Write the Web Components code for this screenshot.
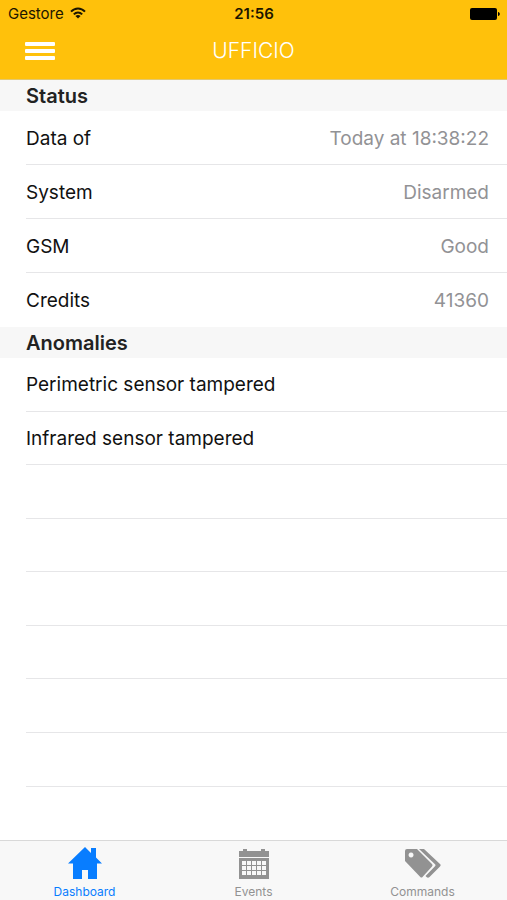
<!DOCTYPE html>
<html lang="en">
<head>
<meta charset="utf-8">
<meta name="viewport" content="width=device-width, initial-scale=1">
<title>Ufficio</title>
<style>
  body {
    margin: 0;
    font-family: Inter, "Liberation Sans", sans-serif;
    background: #fff;
    color: #111;
  }
</style>
</head>
<body>
<alarm-app>
  <status-bar slot="top" carrier="Gestore" time="21:56"></status-bar>
  <nav-header slot="top">UFFICIO</nav-header>

  <list-section heading="Status">
    <list-row>Data of<span slot="value">Today at 18:38:22</span></list-row>
    <list-row>System<span slot="value">Disarmed</span></list-row>
    <list-row>GSM<span slot="value">Good</span></list-row>
    <list-row last>Credits<span slot="value">41360</span></list-row>
  </list-section>
  <list-section heading="Anomalies" fill>
    <list-row>Perimetric sensor tampered</list-row>
    <list-row>Infrared sensor tampered</list-row>
    <list-row></list-row>
    <list-row></list-row>
    <list-row></list-row>
    <list-row></list-row>
    <list-row></list-row>
    <list-row></list-row>
    <list-row last></list-row>
  </list-section>

  <tab-bar slot="bottom">
    <tab-item icon="home" href="#dashboard" active>Dashboard</tab-item>
    <tab-item icon="calendar" href="#events">Events</tab-item>
    <tab-item icon="tags" href="#commands">Commands</tab-item>
  </tab-bar>
</alarm-app>

<script>
class AlarmApp extends HTMLElement {
  connectedCallback() {
    this.attachShadow({ mode: 'open' });
    this.shadowRoot.innerHTML = `
      <style>
        :host {
          display: flex;
          flex-direction: column;
          min-height: 100vh;
        }
        header {
          background: #ffc10b;
          border-bottom: 1px solid #e3c86f;
        }
        main {
          flex: 1;
          display: flex;
          flex-direction: column;
        }
      </style>
      <header><slot name="top"></slot></header>
      <main><slot></slot></main>
      <slot name="bottom"></slot>
    `;
  }
}
customElements.define('alarm-app', AlarmApp);

class StatusBar extends HTMLElement {
  connectedCallback() {
    this.attachShadow({ mode: 'open' });
    this.shadowRoot.innerHTML = `
      <style>
        :host {
          display: grid;
          grid-template-columns: 1fr auto 1fr;
          align-items: center;
          height: 27px;
          padding: 0 7px 0 8px;
          font-size: 15px;
          color: #1c1600;
        }
        .carrier {
          display: flex;
          align-items: center;
          gap: 6px;
        }
        .time {
          font-weight: 600;
        }
        .battery {
          justify-self: end;
        }
        svg {
          display: block;
        }
      </style>
      <span class="carrier">
        ${this.getAttribute('carrier')}
        <svg width="16" height="14" viewBox="0 0 16 14" aria-hidden="true">
          <g fill="none" stroke="currentColor" stroke-width="2">
            <path d="M1 4.600C5 .3 11 .3 15 4.600"/>
            <path d="M3.800 7.400c2.400-2.500 6-2.500 8.400 0"/>
          </g>
          <path d="M8 11.600 5.400 9C7 7.800 9 7.800 10.600 9z" fill="currentColor"/>
        </svg>
      </span>
      <span class="time">${this.getAttribute('time')}</span>
      <svg class="battery" width="30" height="12" viewBox="0 0 30 12" aria-hidden="true">
        <rect width="27" height="12" rx="2" fill="#000"/>
        <path d="M28 4c2.400.4 2.400 3.600 0 4z" fill="#000"/>
      </svg>
    `;
  }
}
customElements.define('status-bar', StatusBar);

class NavHeader extends HTMLElement {
  connectedCallback() {
    this.attachShadow({ mode: 'open' });
    this.shadowRoot.innerHTML = `
      <style>
        :host {
          display: grid;
          grid-template-columns: 1fr auto 1fr;
          align-items: center;
          height: 48px;
          padding: 0 25px 4px;
          color: #fff;
        }
        button {
          justify-self: start;
          padding: 0;
          border: 0;
          background: none;
          color: inherit;
        }
        svg {
          display: block;
        }
        h1 {
          margin: 0;
          font-size: 21px;
          line-height: 28px;
          font-weight: 300;
        }
      </style>
      <button type="button" aria-label="Menu">
        <svg width="30" height="20" viewBox="0 0 30 20" fill="currentColor">
          <rect y="1" width="30" height="4" rx="1"/>
          <rect y="8" width="30" height="4" rx="1"/>
          <rect y="15" width="30" height="4" rx="1"/>
        </svg>
      </button>
      <h1><slot></slot></h1>
    `;
  }
}
customElements.define('nav-header', NavHeader);

class ListSection extends HTMLElement {
  connectedCallback() {
    this.attachShadow({ mode: 'open' });
    this.shadowRoot.innerHTML = `
      <style>
        :host {
          --row-height: 54px;
          display: flex;
          flex-direction: column;
        }
        /* the filling section stretches its rows down to the tab bar */
        :host([fill]) {
          --row-height: 53px;
          flex: 1;
        }
        h2 {
          margin: 0;
          padding: 1px 26px 0;
          font-size: 20px;
          line-height: 30px;
          font-weight: 600;
          color: #222;
          background: #f7f7f7;
        }
        .rows {
          flex: 1;
          display: flex;
          flex-direction: column;
        }
      </style>
      <h2>${this.getAttribute('heading')}</h2>
      <div class="rows" role="list"><slot></slot></div>
    `;
  }
}
customElements.define('list-section', ListSection);

class ListRow extends HTMLElement {
  connectedCallback() {
    this.setAttribute('role', 'listitem');
    this.attachShadow({ mode: 'open' });
    this.shadowRoot.innerHTML = `
      <style>
        :host {
          flex: 1 0 0;
          display: flex;
          box-sizing: border-box;
          min-height: var(--row-height);
          padding-left: 26px;
          font-size: 19px;
          line-height: 24px;
        }
        .line {
          flex: 1;
          display: flex;
          align-items: center;
          justify-content: space-between;
          padding: 2px 18px 0 0;
          border-bottom: 1px solid #e6e6e8;
        }
        :host([last]) .line {
          border-bottom-color: transparent;
        }
        .value {
          color: #929295;
        }
      </style>
      <div class="line">
        <span><slot></slot></span>
        <span class="value"><slot name="value"></slot></span>
      </div>
    `;
  }
}
customElements.define('list-row', ListRow);

class TabBar extends HTMLElement {
  connectedCallback() {
    this.attachShadow({ mode: 'open' });
    this.shadowRoot.innerHTML = `
      <style>
        :host {
          display: block;
          background: #f8f8f8;
          border-top: 1px solid #d9d9d9;
        }
        nav {
          display: grid;
          grid-template-columns: repeat(3, 1fr);
        }
      </style>
      <nav><slot></slot></nav>
    `;
  }
}
customElements.define('tab-bar', TabBar);

const ICONS = {
  home: `
    <path d="M18 1 1 17.500h5V33h9v-9h6v9h9V17.500h5l-6-6V2h-5v5z"/>`,
  calendar: `
    <path d="M3 5h4V3h4v2h14V3h4v2h4v6H3zM3 12h30v21H3z"/>
    <g fill="#f8f8f8">
      <path d="M6 15h4v4H6zm5 0h4v4h-4zm5 0h4v4h-4zm5 0h4v4h-4zm5 0h4v4h-4z"/>
      <path d="M6 20h4v4H6zm5 0h4v4h-4zm5 0h4v4h-4zm5 0h4v4h-4zm5 0h4v4h-4z"/>
      <path d="M6 25h4v4H6zm5 0h4v4h-4zm5 0h4v4h-4zm5 0h4v4h-4zm5 0h4v4h-4z"/>
    </g>`,
  tags: `
    <path fill-rule="evenodd" d="M2 3h10l15 15q1.200 1.200 0 2.400L17.500 31q-1 1-2.200 0L0 15V5q0-2 2-2zm4 3.500a2.500 2.500 0 1 0 .1 0z"/>
    <path d="M14 3h5l16 15q1.300 1.200 0 2.400L24.500 31q-1.500 1.300-3 0l-1-1L30 20.200q1-1 0-2z"/>`
};

class TabItem extends HTMLElement {
  connectedCallback() {
    this.attachShadow({ mode: 'open' });
    this.shadowRoot.innerHTML = `
      <style>
        :host {
          display: block;
          color: #929292;
        }
        :host([active]) {
          color: #087dff;
        }
        a {
          display: flex;
          flex-direction: column;
          align-items: center;
          gap: 3px;
          padding: 5px 0 0;
          color: inherit;
          font-size: 12px;
          line-height: 17px;
          text-decoration: none;
        }
        svg {
          display: block;
        }
      </style>
      <a href="${this.getAttribute('href')}">
        <svg width="36" height="34" viewBox="0 0 36 34" fill="currentColor" aria-hidden="true">${ICONS[this.getAttribute('icon')]}</svg>
        <span><slot></slot></span>
      </a>
    `;
  }
}
customElements.define('tab-item', TabItem);
</script>
</body>
</html>
